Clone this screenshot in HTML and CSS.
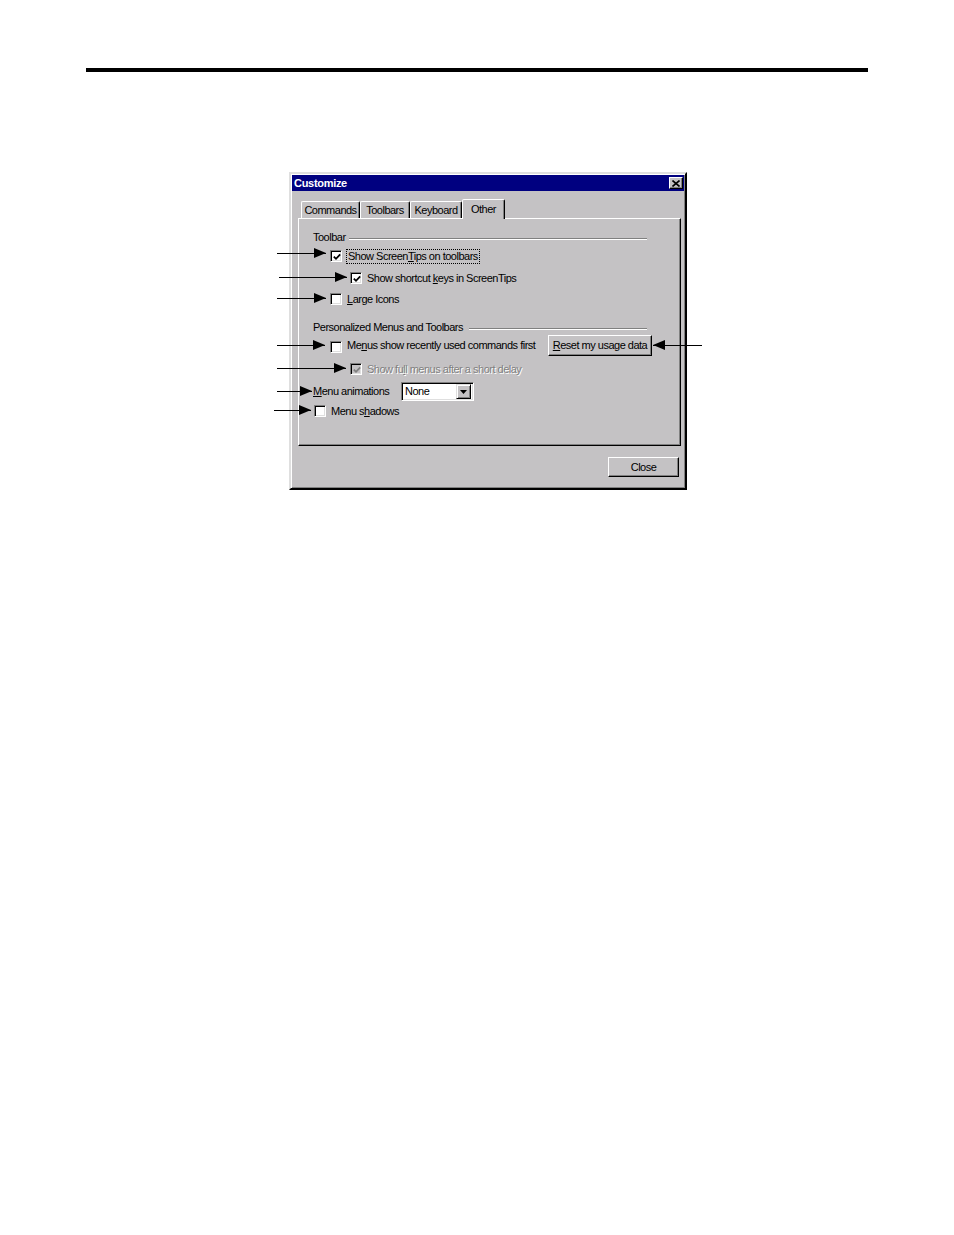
FILE: index.html
```html
<!DOCTYPE html>
<html>
<head>
<meta charset="utf-8">
<title>Customize</title>
<link rel="stylesheet" href="styles.css">
</head>
<body>
<div class="page">
  <div class="rule"></div>
  <div class="dialog">
    <div class="titlebar">
      <span class="title">Customize</span>
      <span class="xbtn"><svg width="8" height="7" viewBox="0 0 8 7"><path d="M0.5 0.5 L7.5 6.5 M7.5 0.5 L0.5 6.5" stroke="#000" stroke-width="1.6" fill="none"/></svg></span>
    </div>
    <div class="dbody">
      <div class="tabs">
        <div class="tab t-cmd">Commands</div>
        <div class="tab t-tb">Toolbars</div>
        <div class="tab t-kb">Keyboard</div>
        <div class="tab t-oth sel">Other</div>
      </div>
      <div class="panel">
        <div class="group g1"><span class="glabel">Toolbar</span><i class="etch"></i></div>

        <div class="row r1">
          <span class="arrow a1 up"></span>
          <span class="cb"><svg class="chk" width="8" height="8" viewBox="0 0 8 8"><path d="M0.8 3.6 L3 5.8 L7.2 1.4" stroke="#000" stroke-width="1.8" fill="none"/></svg></span>
          <span class="lbl focus">Show Screen<u>T</u>ips on toolbars</span>
        </div>

        <div class="row r2">
          <span class="arrow a2"></span>
          <span class="cb"><svg class="chk" width="8" height="8" viewBox="0 0 8 8"><path d="M0.8 3.6 L3 5.8 L7.2 1.4" stroke="#000" stroke-width="1.8" fill="none"/></svg></span>
          <span class="lbl">Show shortcut <u>k</u>eys in ScreenTips</span>
        </div>

        <div class="row r3">
          <span class="arrow a3"></span>
          <span class="cb"></span>
          <span class="lbl"><u>L</u>arge Icons</span>
        </div>

        <div class="group g2"><span class="glabel">Personalized Menus and Toolbars</span><i class="etch"></i></div>

        <div class="row r4">
          <span class="arrow a4"></span>
          <span class="cb"></span>
          <span class="lbl">Me<u>n</u>us show recently used commands first</span>
          <span class="btn reset"><u>R</u>eset my usage data<span class="arrow ar"></span></span>
        </div>

        <div class="row r5">
          <span class="arrow a5"></span>
          <span class="cb dis"><svg class="chk" width="8" height="8" viewBox="0 0 8 8"><path d="M0.8 3.6 L3 5.8 L7.2 1.4" stroke="#808080" stroke-width="1.8" fill="none"/></svg></span>
          <span class="lbl disabled">Show fu<u>l</u>l menus after a short delay</span>
        </div>

        <div class="row r6">
          <span class="arrow a6"></span>
          <span class="clabel"><u>M</u>enu animations</span>
          <span class="combo"><span class="cval">None</span><span class="dd"><svg width="7" height="4" viewBox="0 0 7 4"><path d="M0 0 H7 L3.5 4 Z" fill="#000"/></svg></span></span>
        </div>

        <div class="row r7">
          <span class="arrow a7"></span>
          <span class="cb"></span>
          <span class="lbl">Menu s<u>h</u>adows</span>
        </div>
      </div>
      <div class="footer">
        <span class="btn close">Close</span>
      </div>
    </div>
  </div>
</div>
</body>
</html>
```

FILE: styles.css
```css
html, body {
  margin: 0;
  padding: 0;
  background: #ffffff;
}

body {
  font-family: "Liberation Sans", Arial, sans-serif;
  font-size: 11px;
  color: #000;
}

.page {
  padding-top: 68px;
}

.rule {
  margin-left: 86px;
  width: 782px;
  height: 4px;
  background: #000;
}

.dialog {
  margin-top: 100px;
  margin-left: 289px;
  width: 398px;
  height: 318px;
  box-sizing: border-box;
  border: 2px solid;
  border-color: #dfdfdf #000 #000 #dfdfdf;
  box-shadow: inset 1px 1px 0 #fff, inset -1px -1px 0 #808080;
  padding: 1px;
  background: #c4c2c4;
}

.titlebar {
  height: 16px;
  background: #000080;
  display: flex;
  align-items: center;
  padding-left: 2px;
}

.title {
  color: #fff;
  font-weight: bold;
  font-size: 11px;
  letter-spacing: -0.3px;
  line-height: 13px;
}

.xbtn {
  margin-left: auto;
  margin-right: 1px;
  width: 14px;
  height: 12px;
  box-sizing: border-box;
  background: #c4c2c4;
  border: 1px solid;
  border-color: #fff #000 #000 #fff;
  box-shadow: inset -1px -1px 0 #808080;
  display: flex;
  align-items: center;
  justify-content: center;
}

.dbody {
  padding: 8px 3px 10px 6px;
}

.text, .tab, .lbl, .glabel, .clabel, .btn, .cval {
  letter-spacing: -0.5px;
  line-height: 13px;
  white-space: nowrap;
}

.tabs {
  display: flex;
  align-items: flex-end;
  height: 19px;
  padding-left: 3px;
}

.tab {
  height: 17px;
  box-sizing: border-box;
  border: 1px solid;
  border-bottom: none;
  border-color: #fff #000 transparent #fff;
  border-radius: 2px 2px 0 0;
  box-shadow: inset -1px 0 0 #808080;
  padding-top: 2px;
  text-align: center;
}

.t-cmd { width: 59px; }
.t-tb { width: 50px; }
.t-kb { width: 52px; }
.t-oth { width: 43px; }

.tab.sel {
  height: 20px;
  margin-bottom: -1px;
  position: relative;
  z-index: 1;
  background: #c4c2c4;
  padding-top: 3px;
}

.panel {
  height: 228px;
  box-sizing: border-box;
  border: 1px solid;
  border-color: #fff #000 #000 #fff;
  box-shadow: inset -1px -1px 0 #808080;
  padding: 12px 28px 0 14px;
}

.group {
  display: flex;
  align-items: center;
  height: 13px;
}

.etch {
  flex: 1;
  height: 0;
  border-top: 1px solid #808080;
  border-bottom: 1px solid #fff;
  margin: 2px 5px 0 3px;
}

.g2 { margin-top: 16px; }
.g2 .etch { margin-left: 6px; }

.row {
  position: relative;
  display: flex;
  align-items: center;
  height: 12px;
}

.r1 { margin-top: 6px; padding-left: 17px; }
.r2 { margin-top: 10px; padding-left: 37px; }
.r3 { margin-top: 9px; padding-left: 17px; }
.r4 { margin-top: 1px; padding-left: 17px; height: 21px; }
.r5 { margin-top: 7px; padding-left: 37px; }
.r6 { margin-top: 7px; height: 19px; }
.r7 { margin-top: 4px; padding-left: 1px; }

.cb {
  width: 12px;
  height: 12px;
  flex: none;
  box-sizing: border-box;
  border: 1px solid;
  border-color: #808080 #fff #fff #808080;
  box-shadow: inset 1px 1px 0 #000, inset -1px -1px 0 #dfdfdf;
  background: #fff;
  display: flex;
  align-items: center;
  justify-content: center;
}

.r4 .cb { margin-top: 2px; }

.cb.dis {
  background: #c4c2c4;
}

.chk {
  margin: 1px 0 0 1px;
}

.lbl {
  margin-left: 5px;
}

.lbl.focus {
  margin-left: 4px;
  border: 1px dotted #000;
  padding: 0 1px;
}

.lbl.disabled {
  color: #808080;
  text-shadow: 1px 1px 0 #fff;
}

.clabel {
  width: 88px;
  flex: none;
}

.combo {
  width: 73px;
  height: 19px;
  box-sizing: border-box;
  border: 1px solid;
  border-color: #808080 #fff #fff #808080;
  box-shadow: inset 1px 1px 0 #000, inset -1px -1px 0 #dfdfdf;
  background: #fff;
  display: flex;
  align-items: center;
  padding: 2px 2px 2px 3px;
}

.cval {
  flex: 1;
}

.dd {
  width: 15px;
  height: 15px;
  box-sizing: border-box;
  background: #c4c2c4;
  border: 1px solid;
  border-color: #dfdfdf #000 #000 #dfdfdf;
  box-shadow: inset 1px 1px 0 #fff, inset -1px -1px 0 #808080;
  display: flex;
  align-items: center;
  justify-content: center;
}

.btn {
  position: relative;
  box-sizing: border-box;
  border: 1px solid;
  border-color: #fff #000 #000 #fff;
  box-shadow: inset -1px -1px 0 #808080;
  display: flex;
  align-items: center;
  justify-content: center;
  background: #c4c2c4;
}

.reset {
  margin-left: auto;
  width: 104px;
  height: 21px;
}

.footer {
  margin-top: 11px;
  display: flex;
  justify-content: flex-end;
  padding-right: 2px;
}

.close {
  width: 71px;
  height: 20px;
}

/* annotation arrows */
.arrow {
  position: absolute;
  top: 50%;
  height: 1px;
  margin-top: -1px;
  background: #000;
}

.arrow::after {
  content: "";
  position: absolute;
  right: 0;
  top: -5px;
  border-left: 12px solid #000;
  border-top: 5.5px solid transparent;
  border-bottom: 5.5px solid transparent;
}

.arrow.up { margin-top: -3px; }

.a1 { left: -36px; width: 49px; }
.a2 { left: -34px; width: 68px; }
.a3 { left: -36px; width: 49px; }
.a4 { left: -36px; width: 48px; }
.a5 { left: -36px; width: 69px; }
.a6 { left: -36px; width: 35px; }
.a7 { left: -39px; width: 37px; }

.arrow.ar {
  left: calc(100% + 2px);
  width: 49px;
  top: 50%;
}

.arrow.ar::after {
  right: auto;
  left: 0;
  border-left: none;
  border-right: 12px solid #000;
}
```
